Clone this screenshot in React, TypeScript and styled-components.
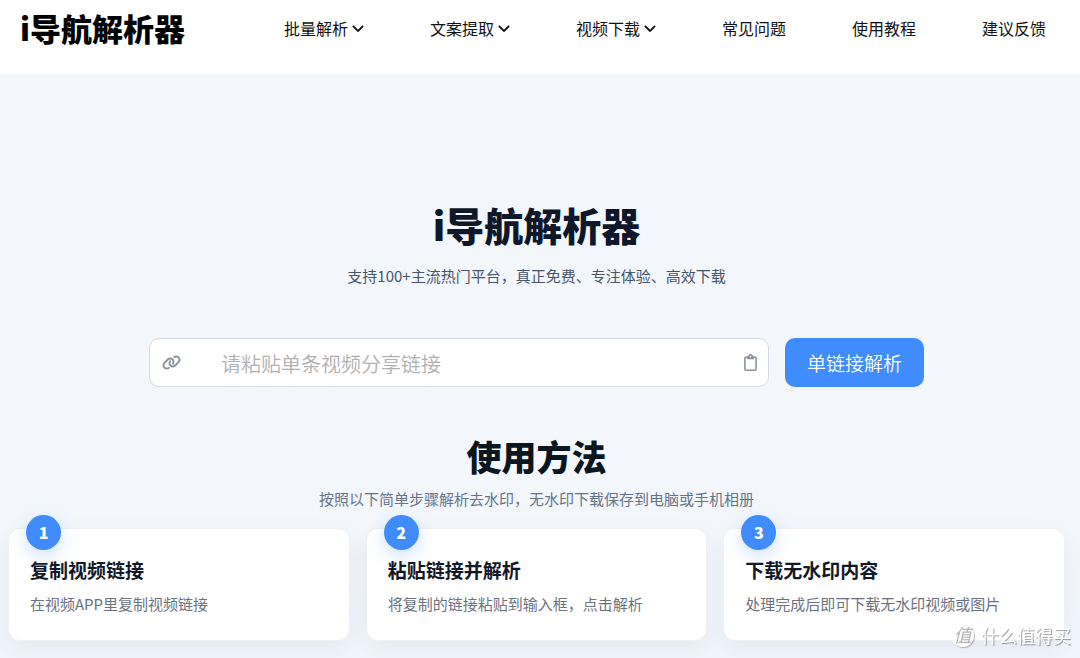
import React from "react";
import styled, { createGlobalStyle } from "styled-components";
import { FaChevronDown, FaLink, FaRegClipboard } from "react-icons/fa6";

const GlobalStyle = createGlobalStyle`
  *, *::before, *::after { box-sizing: border-box; }
  body {
    margin: 0;
    background: #f3f7fc;
    font-family: "Noto Sans CJK SC", "Noto Sans", sans-serif;
  }
  h1, h2, h3, p, ul, ol { margin: 0; padding: 0; }
  ul, ol { list-style: none; }
`;

const Page = styled.div`
  min-height: 100vh;
  display: flex;
  flex-direction: column;
`;

const Header = styled.header`
  display: flex;
  align-items: center;
  justify-content: space-between;
  flex-wrap: wrap;
  padding: 4px 34px 22px 20px;
  background: #fff;
`;

const Logo = styled.a`
  color: #000;
  font-size: 31px;
  font-weight: 900;
  line-height: 48px;
  text-decoration: none;
`;

const NavList = styled.ul`
  display: flex;
  flex-wrap: wrap;
  column-gap: 66px;
`;

const NavLink = styled.a`
  display: flex;
  align-items: center;
  gap: 4px;
  color: #111;
  font-size: 16px;
  line-height: 24px;
  text-decoration: none;

  svg {
    width: 12px;
    height: 14px;
    stroke: currentColor;
    stroke-width: 24;
  }
`;

const Main = styled.main`
  flex: 1;
  display: flex;
  flex-direction: column;
  align-items: center;
  padding: 123px 15px 18px 8px;
  background: linear-gradient(#f3f7fc 80%, #f1f5fe);
  text-align: center;
`;

const Title = styled.h1`
  color: #0f172a;
  font-size: 39px;
  font-weight: 900;
  line-height: 54px;
`;

const Subtitle = styled.p`
  margin-top: 13px;
  color: #475569;
  font-size: 15px;
  line-height: 24px;
`;

const Form = styled.form`
  display: flex;
  gap: 16px;
  width: 100%;
  max-width: 775px;
  margin-top: 50px;
`;

const Field = styled.div`
  flex: 1;
  display: flex;
  align-items: center;
  height: 49px;
  padding: 0 11px 0 12px;
  border: 1px solid #d3d8e2;
  border-radius: 10px;
  background: #fff;
  color: #8b93a1;
`;

const FieldLabel = styled.label`
  display: flex;
`;

const UrlInput = styled.input`
  flex: 1;
  min-width: 0;
  margin-left: 40px;
  padding: 2px 0 0;
  border: 0;
  outline: 0;
  background: none;
  color: #111;
  font: 350 20px/28px "Noto Sans CJK SC", sans-serif;

  &::placeholder {
    color: #b0b0b0;
    opacity: 1;
  }
`;

const PasteButton = styled.button`
  display: flex;
  padding: 0;
  border: 0;
  background: none;
  color: inherit;
  cursor: pointer;

  svg {
    width: 13px;
    height: 17px;
  }
`;

const SubmitButton = styled.button`
  padding: 0 22px;
  border: 0;
  border-radius: 10px;
  background: #408cff;
  color: #fff;
  font: 350 19px/28px "Noto Sans CJK SC", sans-serif;
  cursor: pointer;
`;

const SectionTitle = styled.h2`
  margin-top: 45px;
  color: #0b1620;
  font-size: 35px;
  font-weight: 900;
  line-height: 48px;
`;

const SectionText = styled.p`
  margin-top: 7px;
  color: #64748b;
  font-size: 15px;
  line-height: 24px;
`;

const Steps = styled.ol`
  display: grid;
  grid-template-columns: repeat(3, 1fr);
  gap: 16px;
  width: 100%;
  margin-top: 17px;
  text-align: left;
`;

const Step = styled.li`
  position: relative;
  padding: 26px 21px 24px;
  border: 1px solid #eef0f3;
  border-radius: 12px;
  background: #fff;
  box-shadow: 0 8px 24px rgba(15, 23, 42, 0.06);
`;

const StepNumber = styled.span`
  position: absolute;
  top: -14px;
  left: 17px;
  width: 35px;
  height: 35px;
  border-radius: 50%;
  background: #408cff;
  box-shadow: 0 6px 16px rgba(64, 140, 255, 0.25);
  color: #fff;
  font-size: 16px;
  font-weight: 900;
  line-height: 35px;
  text-align: center;
`;

const StepTitle = styled.h3`
  color: #111827;
  font-size: 19px;
  font-weight: 700;
  line-height: 30px;
`;

const StepText = styled.p`
  margin-top: 7px;
  color: #6b7280;
  font-size: 15px;
  line-height: 24px;
`;

const Watermark = styled.div`
  position: fixed;
  right: 9px;
  bottom: 10px;
  display: flex;
  align-items: center;
  gap: 7px;
  color: #fff;
  font-size: 18px;
  line-height: 26px;
  text-shadow: 1px 1px 1px rgba(0, 0, 0, 0.4);
  pointer-events: none;
`;

const WatermarkSeal = styled.span`
  width: 23px;
  height: 23px;
  border-radius: 50%;
  background: #fff;
  box-shadow: 1px 1px 1px rgba(0, 0, 0, 0.25);
  color: #b4b4b4;
  font-size: 18px;
  font-style: italic;
  line-height: 20px;
  text-align: center;
  text-shadow: none;
`;

const navItems = [
  { label: "批量解析", menu: true },
  { label: "文案提取", menu: true },
  { label: "视频下载", menu: true },
  { label: "常见问题", menu: false },
  { label: "使用教程", menu: false },
  { label: "建议反馈", menu: false },
];

const steps = [
  { title: "复制视频链接", text: "在视频APP里复制视频链接" },
  { title: "粘贴链接并解析", text: "将复制的链接粘贴到输入框，点击解析" },
  { title: "下载无水印内容", text: "处理完成后即可下载无水印视频或图片" },
];

export default function App() {
  return (
    <Page lang="zh-CN">
      <GlobalStyle />
      <Header>
        <Logo href="#">i导航解析器</Logo>
        <nav>
          <NavList>
            {navItems.map((item) => (
              <li key={item.label}>
                <NavLink href="#">
                  {item.label}
                  {item.menu && <FaChevronDown aria-hidden />}
                </NavLink>
              </li>
            ))}
          </NavList>
        </nav>
      </Header>
      <Main>
        <Title>i导航解析器</Title>
        <Subtitle>支持100+主流热门平台，真正免费、专注体验、高效下载</Subtitle>
        <Form onSubmit={(event) => event.preventDefault()}>
          <Field>
            <FieldLabel htmlFor="share-url" aria-label="分享链接">
              <FaLink size={19} aria-hidden />
            </FieldLabel>
            <UrlInput id="share-url" type="text" placeholder="请粘贴单条视频分享链接" />
            <PasteButton type="button" aria-label="粘贴">
              <FaRegClipboard aria-hidden />
            </PasteButton>
          </Field>
          <SubmitButton type="submit">单链接解析</SubmitButton>
        </Form>
        <SectionTitle>使用方法</SectionTitle>
        <SectionText>按照以下简单步骤解析去水印，无水印下载保存到电脑或手机相册</SectionText>
        <Steps>
          {steps.map((step, index) => (
            <Step key={step.title}>
              <StepNumber>{index + 1}</StepNumber>
              <StepTitle>{step.title}</StepTitle>
              <StepText>{step.text}</StepText>
            </Step>
          ))}
        </Steps>
      </Main>
      <Watermark>
        <WatermarkSeal>值</WatermarkSeal>
        什么值得买
      </Watermark>
    </Page>
  );
}
